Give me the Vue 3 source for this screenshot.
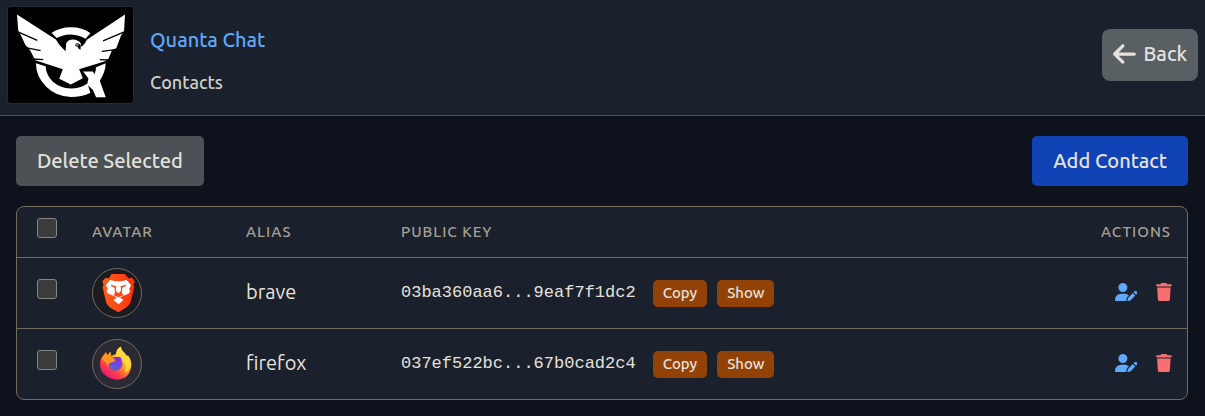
<script setup>
import { ref, computed } from 'vue'

const contacts = ref([
  { alias: 'brave', key: '03ba360aa6...9eaf7f1dc2', selected: false },
  { alias: 'firefox', key: '037ef522bc...67b0cad2c4', selected: false },
])

const allSelected = computed({
  get: () => contacts.value.length > 0 && contacts.value.every((c) => c.selected),
  set: (value) => contacts.value.forEach((c) => { c.selected = value }),
})
</script>

<template>
  <div class="page">
    <header class="top">
      <svg class="logo" viewBox="24 20 376 290" preserveAspectRatio="none" role="img" aria-label="Quanta logo">
        <rect x="24" y="20" width="376" height="290" fill="#000" />
        <g fill="#fff">
          <path d="M155 98Q180 81 213 81Q248 81 272 99L257 116Q238 104 213 103Q188 104 170 114Z" />
          <path d="M108 190L137 199Q139 226 159 246Q182 266 213 266Q242 266 263 251L272 279Q246 292 213 292Q168 290 139 261Q108 230 108 190Z" />
          <path d="M289 202L318 190Q317 217 300 243L318 293H289L279 270L262 254L266 236L250 215H280L284 224Q288 214 289 202Z" />
          <path d="M51 43L168 118Q177 136 197 154L199 130Q204 118 219 118Q236 119 243 130V140Q254 136 261 119L376 43L373 94L364 106L350 144L337 151L326 176L316 184L238 208L249 235L213 254L178 237L189 208L106 181L101 171L90 150L76 134L62 104L55 93Z" />
        </g>
        <path d="M54 95L112 121M74 142L122 152M98 177L130 179M374 95L310 122M353 148L306 154M329 180L300 179" stroke="#000" stroke-width="4" fill="none" />
        <path d="M228 130Q240 127 243 137L242 149Q235 148 234 141L226 137Z" fill="#000" />
        <path d="M229 134L236 135" stroke="#fff" stroke-width="3" />
      </svg>
      <div class="titles">
        <h1>Quanta Chat</h1>
        <h2>Contacts</h2>
      </div>
      <button type="button" class="back">
        <svg viewBox="0 0 448 512" aria-hidden="true">
          <path fill="currentColor" d="M9.4 233.400c-12.500 12.500-12.500 32.800 0 45.300l160 160c12.500 12.500 32.800 12.500 45.300 0s12.500-32.800 0-45.300L109.200 288H416c17.700 0 32-14.300 32-32s-14.300-32-32-32H109.300L214.600 118.600c12.500-12.500 12.500-32.800 0-45.300s-32.800-12.500-45.300 0l-160 160z" />
        </svg>
        Back
      </button>
    </header>

    <main>
      <div class="toolbar">
        <button type="button" class="btn muted">Delete Selected</button>
        <button type="button" class="btn primary">Add Contact</button>
      </div>

      <div class="panel">
        <table>
          <thead>
            <tr>
              <th class="check"><input v-model="allSelected" type="checkbox" aria-label="Select all contacts"></th>
              <th class="avatar-col">AVATAR</th>
              <th class="alias-col">ALIAS</th>
              <th>PUBLIC KEY</th>
              <th class="actions-col">ACTIONS</th>
            </tr>
          </thead>
          <tbody>
            <tr v-for="contact in contacts" :key="contact.key">
              <td class="check"><input v-model="contact.selected" type="checkbox" :aria-label="`Select ${contact.alias}`"></td>
              <td>
                <svg v-if="contact.alias === 'brave'" class="avatar dark" viewBox="36 38 150 150" aria-hidden="true">
                  <defs>
                    <linearGradient id="lion" x1="0" x2="1">
                      <stop offset="0" stop-color="#ff5a16" />
                      <stop offset=".5" stop-color="#fb4a18" />
                      <stop offset="1" stop-color="#fb3208" />
                    </linearGradient>
                  </defs>
                  <path fill="url(#lion)" d="M94 54H135L147 67L158 65L167 77L162 87L165 95L153 143Q149 153 139 159L115 173L90 159Q81 153 77 143L66 95L69 87L65 77L75 65L86 67Z" />
                  <path fill="#fff" d="M89 72L106 76H124L141 72L155 89L149 100L152 108L147 115L132 121L120 127L131 135L116 148L100 135L111 127L98 121L84 115L78 108L82 100L76 89Z" />
                  <path fill="#fb4818" d="M91 87L109 92L107 101L110 110L115 113L121 110L124 101L122 92L140 87L138 92L128 96L126 114L132 119L116 126L99 119L105 114L103 96L93 92Z" />
                </svg>
                <svg v-else class="avatar plum" viewBox="36 38 150 150" aria-hidden="true">
                  <defs>
                    <linearGradient id="flame" x1=".85" y1=".05" x2=".2" y2=".95">
                      <stop offset="0" stop-color="#fff44f" />
                      <stop offset=".3" stop-color="#ffcb35" />
                      <stop offset=".52" stop-color="#ff8a25" />
                      <stop offset=".74" stop-color="#ff3b4a" />
                      <stop offset="1" stop-color="#e31587" />
                    </linearGradient>
                    <linearGradient id="globe" x1=".7" y1="0" x2=".3" y2="1">
                      <stop offset="0" stop-color="#a33ef0" />
                      <stop offset=".5" stop-color="#7047dc" />
                      <stop offset="1" stop-color="#5264d8" />
                    </linearGradient>
                  </defs>
                  <path fill="url(#flame)" d="M76 76L82 86L90 75L93 88Q103 84 108 82Q107 67 123 58Q124 70 134 78Q140 84 141 89L145 86Q156 100 156 117Q153 145 135 156Q108 169 82 154Q56 139 58 108Q60 92 71 83Z" />
                  <path fill="#ffd83c" d="M105 91Q109 74 123 58Q124 71 135 80Q150 94 151 117Q149 133 135 142Q142 125 134 107Q127 92 105 91Z" />
                  <circle cx="106" cy="112" r="22" fill="url(#globe)" />
                  <path fill="#ff9620" d="M76 76L82 86L90 75L93 89L103 98L107 101Q98 109 88 110Q82 113 84 122Q80 114 74 106L64 99Z" />
                  <path fill="#842ed5" d="M102 93Q116 86 128 98L119 100L124 109Q114 106 107 101Z" />
                </svg>
              </td>
              <td class="alias">{{ contact.alias }}</td>
              <td>
                <div class="key">
                  <code>{{ contact.key }}</code>
                  <button type="button" class="small">Copy</button>
                  <button type="button" class="small">Show</button>
                </div>
              </td>
              <td>
                <div class="actions">
                  <button type="button" class="icon edit" :aria-label="`Edit ${contact.alias}`">
                    <svg viewBox="0 0 640 512" aria-hidden="true">
                      <path fill="currentColor" d="M224 256A128 128 0 1 0 224 0a128 128 0 1 0 0 256zm-45.700 48C79.800 304 0 383.800 0 482.300C0 498.700 13.300 512 29.700 512H322.800c-3.100-8.800-3.700-18.400-1.400-27.800l15-60.100c2.800-11.300 8.600-21.500 16.800-29.700l40.300-40.300c-32.100-31-75.700-50.100-123.900-50.100H178.300zm435.500-68.300c-15.600-15.600-40.900-15.600-56.600 0l-29.400 29.400 71 71 29.400-29.400c15.600-15.600 15.600-40.900 0-56.600l-14.400-14.400zM375.900 417c-4.100 4.100-7 9.200-8.400 14.900l-15 60.100c-1.400 5.500 .2 11.200 4.200 15.200s9.700 5.600 15.200 4.200l60.100-15c5.600-1.400 10.800-4.300 14.900-8.400L576.100 358.700l-71-71L375.900 417z" />
                    </svg>
                  </button>
                  <button type="button" class="icon remove" :aria-label="`Delete ${contact.alias}`">
                    <svg viewBox="0 0 448 512" aria-hidden="true">
                      <path fill="currentColor" d="M135.200 17.700L128 32H32C14.300 32 0 46.300 0 64S14.300 96 32 96H416c17.700 0 32-14.300 32-32s-14.300-32-32-32H320l-7.200-14.300C307.400 6.800 296.300 0 284.200 0H163.800c-12.100 0-23.200 6.800-28.600 17.700zM416 128H32L53.200 467c1.600 25.300 22.600 45 47.900 45H346.900c25.300 0 46.300-19.700 47.900-45L416 128z" />
                    </svg>
                  </button>
                </div>
              </td>
            </tr>
          </tbody>
        </table>
      </div>
    </main>
  </div>
</template>

<style>
body {
  margin: 0;
  background: #0e121d;
}
</style>

<style scoped>
.page {
  font-family: Ubuntu, "Noto Sans", "Open Sans", sans-serif;
  font-size: 20px;
  line-height: 30px;
  color: #e5e2dd;
}

button {
  font: inherit;
  color: inherit;
  border: 0;
  cursor: pointer;
}

.top {
  display: flex;
  align-items: center;
  box-sizing: border-box;
  min-height: 116px;
  padding: 6px 7px 11px;
  background: #1a212c;
  border-bottom: 1px solid #4b5058;
}

.logo {
  box-sizing: border-box;
  width: 127px;
  height: 98px;
  border: 1px solid #202c37;
  border-radius: 4px;
}

.titles {
  flex: 1;
  padding-top: 8px;
  margin-left: 16px;
}

h1,
h2 {
  margin: 0;
  font-weight: 500;
}

h1 {
  font-size: 20px;
  line-height: 30px;
  color: #60a9fa;
}

h2 {
  margin-top: 15px;
  font-size: 18px;
  line-height: 24px;
  color: #d2cfca;
}

.back {
  display: flex;
  align-items: center;
  gap: 7px;
  padding: 10px 11px 12px;
  border-radius: 8px;
  background: #596063;
  font-weight: 500;
}

.back svg {
  width: 23px;
  height: 26px;
}

main {
  padding: 20px 17px 16px 16px;
}

.toolbar {
  display: flex;
  justify-content: space-between;
  margin-bottom: 20px;
}

.btn {
  padding: 10px 21px;
  border-radius: 5px;
  font-weight: 500;
}

.muted {
  background: #4b5154;
}

.primary {
  background: #1043b5;
}

.panel {
  border: 1px solid #736b5e;
  border-radius: 8px;
  background: #1a212c;
}

table {
  width: 100%;
  table-layout: fixed;
  border-spacing: 0;
}

th,
td {
  box-sizing: border-box;
  padding: 10px 15px;
  text-align: left;
  vertical-align: middle;
}

th {
  height: 51px;
  font-size: 15px;
  line-height: 20px;
  font-weight: 500;
  letter-spacing: 1px;
  color: #a8a095;
  border-bottom: 1px solid #736b5e;
}

tr:not(:last-child) > td {
  border-bottom: 1px solid #736b5e;
}

.check {
  width: 60px;
  padding: 0 0 0 20px;
}

.avatar-col {
  width: 154px;
}

.alias-col {
  width: 155px;
}

.actions-col {
  width: 140px;
  padding-right: 16px;
  text-align: right;
}

input {
  display: block;
  appearance: none;
  box-sizing: border-box;
  width: 20px;
  height: 20px;
  margin: 0 0 8px;
  border: 1px solid #858585;
  border-radius: 3px;
  background: #3b3b3b;
}

input:checked {
  background: #60a9fa;
}

.avatar {
  display: block;
  box-sizing: border-box;
  width: 50px;
  height: 50px;
  border: 1px solid #736b5e;
  border-radius: 50%;
}

.dark {
  background: #1b1b20;
}

.plum {
  background: #2b2a33;
}

.alias {
  padding-bottom: 12px;
  font-weight: 400;
}

.key {
  display: flex;
  align-items: center;
}

code {
  margin-right: 17px;
  font-family: "Liberation Mono", monospace;
  font-size: 17px;
}

.small {
  padding: 2px 10px 4px;
  border-radius: 5px;
  background: #934207;
  font-size: 15px;
  line-height: 21px;
  font-weight: 500;
}

.small + .small {
  margin-left: 10px;
}

.actions {
  display: flex;
  justify-content: flex-end;
  gap: 19px;
  padding-bottom: 2px;
}

.icon {
  display: flex;
  padding: 0;
  background: none;
}

.icon svg {
  height: 18px;
}

.edit {
  color: #60a9fa;
}

.remove {
  color: #f86f6f;
}
</style>
